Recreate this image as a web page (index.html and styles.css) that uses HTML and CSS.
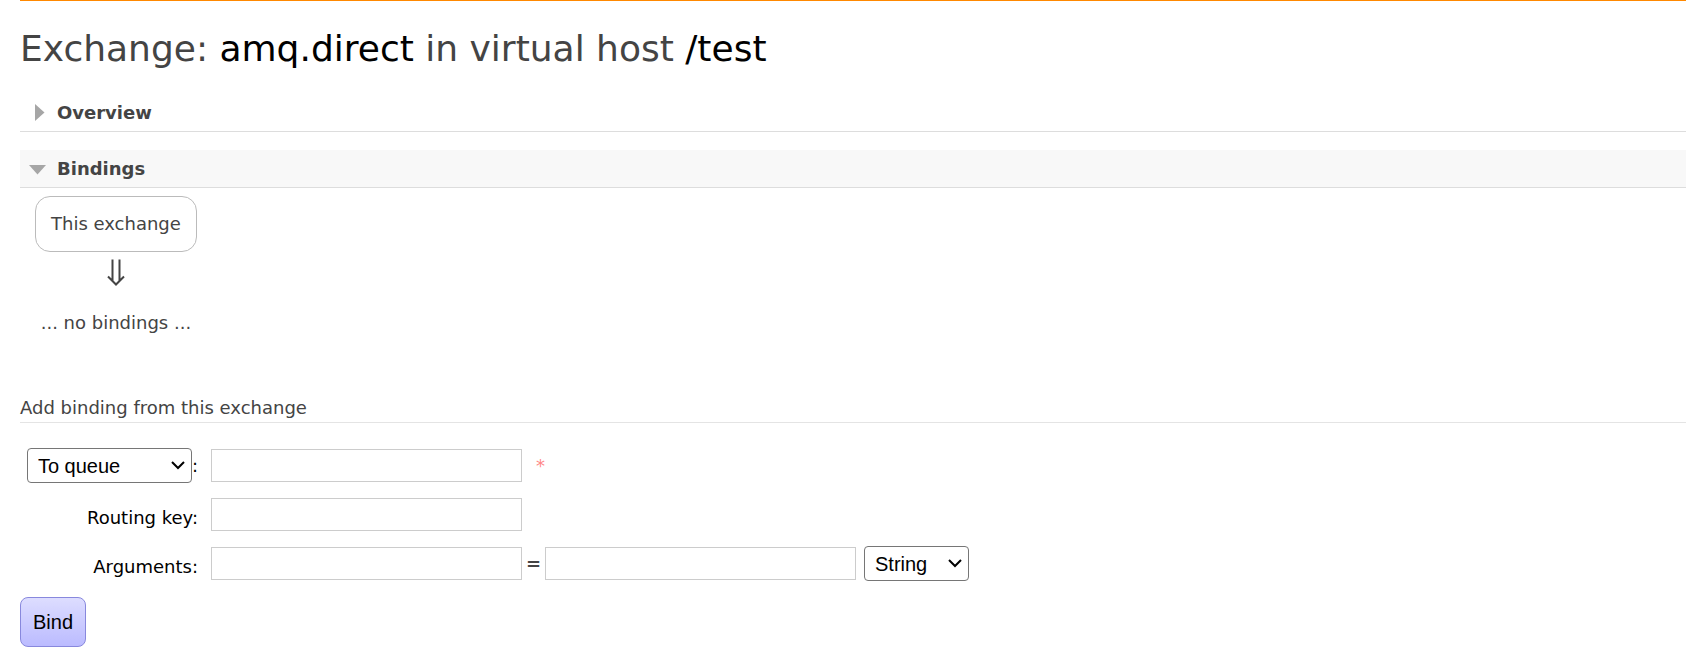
FILE: index.html
```html
<!DOCTYPE html>
<html lang="en">
<head>
<meta charset="utf-8">
<title>Exchange: amq.direct</title>
<link rel="stylesheet" href="styles.css">
</head>
<body>
<main class="main">
  <h1 class="title">Exchange: <b class="name">amq.direct</b> in virtual host <b class="name">/test</b></h1>

  <section class="section">
    <h2 class="section-title">
      <svg class="marker" viewBox="0 0 18 18" aria-hidden="true"><path d="M6 0L15.500 8.500L6 17Z"/></svg>
      Overview
    </h2>
  </section>

  <section class="section">
    <h2 class="section-title open">
      <svg class="marker" viewBox="0 0 18 18" aria-hidden="true"><path d="M0 5H17L8.500 14.500Z"/></svg>
      Bindings
    </h2>
    <div class="bindings">
      <span class="exchange">This exchange</span>
      <svg class="arrow" viewBox="0 0 18 28" aria-hidden="true"><path d="M5.500 0.500V22M12.500 0.500V22M1 17.500L9 25.500L17 17.500"/></svg>
      <p class="empty">... no bindings ...</p>
    </div>

    <h3 class="form-title">Add binding from this exchange</h3>
    <form class="form">
      <div class="fields">
        <div class="label type-label">
          <span class="select-box">
            <select class="select destination-type" aria-label="Destination type">
              <option>To queue</option>
              <option>To exchange</option>
            </select>
            <svg class="chevron" viewBox="0 0 14 9" aria-hidden="true"><path d="M1 1L7 7L13 1"/></svg>
          </span>
          <label for="destination">:</label>
        </div>
        <div class="value">
          <input class="input" id="destination" type="text" required>
          <span class="mandatory">*</span>
        </div>

        <label class="label" for="routing-key">Routing key:</label>
        <div class="value">
          <input class="input" id="routing-key" type="text">
        </div>

        <label class="label" for="argument-key">Arguments:</label>
        <div class="value">
          <input class="input" id="argument-key" type="text">
          <span class="equals">=</span>
          <input class="input" type="text" aria-label="Argument value">
          <span class="select-box argument-box">
            <select class="select argument-type" aria-label="Argument type">
              <option>String</option>
              <option>Number</option>
              <option>Boolean</option>
              <option>List</option>
            </select>
            <svg class="chevron" viewBox="0 0 14 9" aria-hidden="true"><path d="M1 1L7 7L13 1"/></svg>
          </span>
        </div>
      </div>
      <button class="button" type="button">Bind</button>
    </form>
  </section>
</main>
</body>
</html>
```
FILE: styles.css
```css
* {
  box-sizing: border-box;
}

body {
  margin: 0;
  background: #fff;
  color: #444;
  font: 18px/24px Verdana, "DejaVu Sans", sans-serif;
}

.main {
  margin-left: 20px;
  border-top: 1px solid #f80;
}

.title {
  margin: 26px 0 23px;
  font-size: 36px;
  line-height: 44px;
  font-weight: normal;
}

.name {
  color: #000;
  font-weight: normal;
}

.section {
  margin-bottom: 18px;
}

.section-title {
  display: flex;
  align-items: center;
  gap: 10px;
  height: 38px;
  margin: 0;
  padding-left: 9px;
  border-bottom: 1px solid #ddd;
  font-size: 18px;
}

.open {
  background: #f8f8f8;
}

.marker {
  width: 18px;
  height: 18px;
  fill: #a6a6a6;
}

.bindings {
  display: inline-flex;
  flex-direction: column;
  align-items: center;
  margin: 8px 0 0 15px;
}

.exchange {
  padding: 15px;
  border: 1px solid #bbb;
  border-radius: 15px;
}

.arrow {
  width: 18px;
  height: 28px;
  margin: 7px 0 24px;
  fill: none;
  stroke: #444;
  stroke-width: 2;
}

.empty {
  margin: 0;
}

.form-title {
  margin: 61px 0 25px;
  padding-bottom: 2px;
  border-bottom: 1px solid #e4e4e4;
  font-size: 18px;
  font-weight: normal;
}

.fields {
  display: grid;
  grid-template-columns: 178px 1fr;
  column-gap: 13px;
  row-gap: 14px;
  color: #000;
}

.label {
  display: flex;
  align-items: center;
  justify-content: flex-end;
  height: 35px;
  padding-top: 6px;
}

.type-label {
  padding-top: 0;
}

.value {
  display: flex;
  align-items: center;
  height: 35px;
}

.input {
  width: 311px;
  height: 33px;
  padding: 4px;
  border: 1px solid #ccc;
  background: #fff;
  font: 20px "Liberation Sans", Arial, sans-serif;
}

.mandatory {
  margin-left: 14px;
  color: #f88;
}

.equals {
  width: 23px;
  color: #444;
  font-weight: bold;
  text-align: center;
}

.select-box {
  display: flex;
  position: relative;
}

.argument-box {
  margin-left: 8px;
}

.select {
  appearance: none;
  height: 35px;
  padding: 0 10px;
  border: 1px solid #767676;
  border-radius: 4px;
  background: #fff;
  color: #000;
  font: 20px "Liberation Sans", Arial, sans-serif;
}

.chevron {
  position: absolute;
  top: 13px;
  right: 7px;
  width: 14px;
  height: 9px;
  fill: none;
  stroke: #000;
  stroke-width: 2;
  pointer-events: none;
}

.destination-type {
  width: 165px;
}

.argument-type {
  width: 105px;
}

.button {
  margin-top: 16px;
  padding: 12px;
  border: 1px solid #88d;
  border-radius: 8px;
  background: linear-gradient(#ddf, #bbf);
  color: #000;
  font: 20px/24px "Liberation Sans", Arial, sans-serif;
}
```
